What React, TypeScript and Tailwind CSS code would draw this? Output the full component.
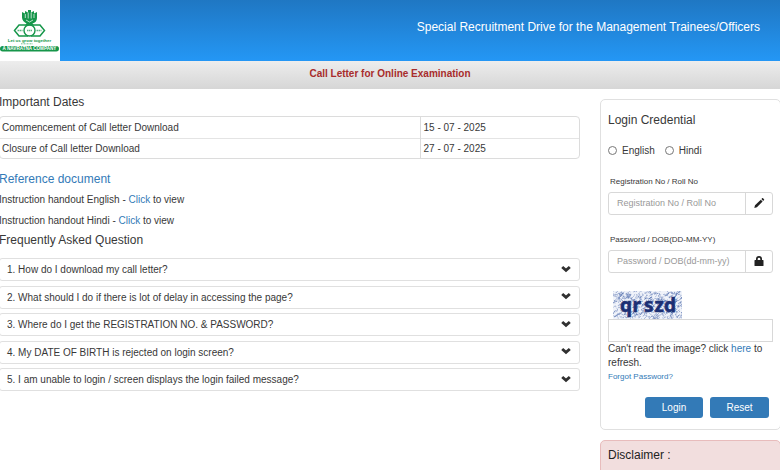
import React from "react";

const faqs = [
  "1. How do I download my call letter?",
  "2. What should I do if there is lot of delay in accessing the page?",
  "3. Where do I get the REGISTRATION NO. & PASSWORD?",
  "4. My DATE OF BIRTH is rejected on login screen?",
  "5. I am unable to login / screen displays the login failed message?",
];

function Logo() {
  return (
    <svg viewBox="0 0 60 61" className="h-[61px] w-[60px] shrink-0 bg-white" role="img" aria-label="Company logo">
      <g fill="none" stroke="#16964a">
        <path d="M19 25h8.500l4 5.500-4 5.500H19l-4.500-5.500z" strokeWidth="1.500" />
        <path d="M31.500 25H40l4.500 5.500L40 36h-8.500l-4-5.500z" strokeWidth="1.500" />
        <circle cx="29.500" cy="30.500" r="5.500" fill="#fff" strokeWidth="1.400" />
        <path d="M17.500 30.500h5M27 30.500h5M36.500 30.500h5" strokeWidth="1.300" strokeDasharray="1.500 .5" opacity=".7" />
      </g>
      <path d="M22 12l3 1.500V11l3 1.500V10h3v2.500l3-1.500v2.500l3-1.500v6c0 3-2 5-4.500 5.500l1.500 2h-9l1.500-2C24 22 22 20 22 17.500z" fill="#16964a" />
      <path d="M25.300 14v4M28.200 12.500v6M31.200 12.500v6M34 14v4M26 20l3.500 2 3.500-2" stroke="#fff" strokeWidth=".7" fill="none" />
      <text x="29.500" y="42.300" textAnchor="middle" fontSize="4.400" fontWeight="bold" fontFamily="Liberation Sans, sans-serif" fill="#16964a">Let us grow together</text>
      <path d="M21 43.800h12" stroke="#16964a" strokeWidth=".6" strokeDasharray="1 .5" />
      <rect x="0" y="46" width="59" height="5.500" rx="2.700" fill="#16964a" />
      <text x="29.500" y="50.300" textAnchor="middle" fontSize="4.600" fontWeight="bold" fontFamily="Liberation Sans, sans-serif" fill="#fff">A NAVRATNA COMPANY</text>
    </svg>
  );
}

function Chevron() {
  return (
    <svg viewBox="0 0 10 8" className="h-2 w-2.5" aria-hidden="true">
      <path d="M1.200 2L5 5.400 8.800 2" fill="none" stroke="#303030" strokeWidth="2.900" />
    </svg>
  );
}

function Pencil() {
  return (
    <svg viewBox="0 0 12 12" className="size-3" fill="#222" aria-hidden="true">
      <path d="M1.300 11l.7-2.700L7.800 2.700l1.800 1.800L3.900 10.200zM8.400 2.100l.8-.8c.3-.3.600-.3.900 0l.9.900c.3.300.3.600 0 .9l-.8.800z" />
    </svg>
  );
}

function Lock() {
  return (
    <svg viewBox="0 0 12 12" className="size-3" fill="#222" aria-hidden="true">
      <path d="M2 5h1V4a3 3 0 0 1 6 0v1h1q.5 0 .5.500v5q0 .5-.5.500H2q-.5 0-.5-.5V5.500Q1.500 5 2 5zm2.700 0h2.600V4a1.300 1.300 0 0 0-2.600 0z" />
    </svg>
  );
}

// A seeded generator keeps the captcha noise the same on every render.
let seed = 11;
const random = () => {
  seed = (seed * 16807) % 2147483647;
  return seed / 2147483647;
};
const specks = Array.from({ length: 480 }, () => {
  const x = random() * 69;
  const y = random() * 28;
  const a = (random() - 0.5) * 6;
  const b = (random() - 0.5) * 5;
  return `M${x.toFixed(1)} ${y.toFixed(1)}q${b.toFixed(1)} ${a.toFixed(1)} ${a.toFixed(1)} ${b.toFixed(1)}`;
}).join("");

function Captcha() {
  return (
    <svg viewBox="0 0 69 28" className="ml-[5px] block h-7 w-[69px]" role="img" aria-label="Captcha qrszd">
      <rect width="69" height="28" fill="#f0f3fa" />
      <path d={specks} fill="none" stroke="#4864a8" strokeWidth=".55" opacity=".8" />
      <text x="7 19.500 31 41.500 51" y="21" fontSize="19" fontWeight="bold" fontFamily="Noto Sans, sans-serif" fill="#1b2f74" stroke="#1b2f74" strokeWidth=".6">qrszd</text>
    </svg>
  );
}

type FieldProps = { id: string; label: string; placeholder: string; type: string; icon: React.ReactNode };

function Field({ id, label, placeholder, type, icon }: FieldProps) {
  return (
    <div>
      <label htmlFor={id} className="block pl-0.5 text-[8px] leading-5">{label}</label>
      <div className="flex h-[23px] rounded-[3px] border border-[#d8d8d8]">
        <input id={id} type={type} placeholder={placeholder} className="min-w-0 flex-1 px-2 text-[9px] placeholder:text-[#999] focus:outline-none" />
        <span className="flex w-[27px] items-center justify-center border-l border-[#d8d8d8] pb-0.5">{icon}</span>
      </div>
    </div>
  );
}

export default function App() {
  return (
    <div className="h-screen overflow-hidden bg-white font-['Liberation_Sans',Arial,sans-serif] text-[10px] text-[#383838]">
      <header className="flex items-center bg-linear-to-b from-[#1f77c3] to-[#2497f5]">
        <Logo />
        <h1 className="flex-1 pr-5 pb-2 text-right text-[12px] leading-5 text-white">
          Special Recruitment Drive for the Management Trainees/Officers
        </h1>
      </header>
      <div className="h-7 bg-linear-to-b from-[#ededed] to-[#d6d6d6] text-center text-[10px] leading-[26px] font-bold text-[#a82c2c]">
        Call Letter for Online Examination
      </div>
      <main className="-mr-px flex items-start gap-5">
        <div className="-ml-px min-w-0 flex-1">
          <h2 className="pt-1 text-[12px] leading-[18px]">Important Dates</h2>
          <div className="mt-[5px] overflow-hidden rounded border border-[#dcdcdc]">
            <table className="w-full border-collapse text-left">
              <tbody>
                <tr className="h-[21px] border-b border-[#e4e4e4]">
                  <td className="w-[420px] border-r border-[#dcdcdc] px-0.5">Commencement of Call letter Download</td>
                  <td className="px-[3px]">15 - 07 - 2025</td>
                </tr>
                <tr className="h-5">
                  <td className="border-r border-[#dcdcdc] px-0.5">Closure of Call letter Download</td>
                  <td className="px-[3px]">27 - 07 - 2025</td>
                </tr>
              </tbody>
            </table>
          </div>
          <h2 className="mt-2.5 text-[12px] leading-5 text-[#337ab7]">Reference document</h2>
          <p className="leading-[21px]">Instruction handout English - <a href="#english" className="text-[#337ab7]">Click</a> to view</p>
          <p className="leading-[21px]">Instruction handout Hindi - <a href="#hindi" className="text-[#337ab7]">Click</a> to view</p>
          <h2 className="text-[12px] leading-[18px]">Frequently Asked Question</h2>
          <div className="mt-[9px] flex h-[133px] flex-col justify-between">
            {faqs.map((q) => (
              <button key={q} type="button" className="flex h-[23px] items-center justify-between rounded-[3px] border border-[#e0e0e0] pr-2 pl-[7px] text-left">
                <span>{q}</span>
                <span className="pb-0.5"><Chevron /></span>
              </button>
            ))}
          </div>
        </div>
        <aside className="w-[181px] shrink-0 pt-2.5">
          <form className="rounded-[5px] border border-[#e0e0e0] px-[7px] pt-2.5 pb-[11px]" onSubmit={(e) => e.preventDefault()}>
            <h2 className="text-[12px] leading-5">Login Credential</h2>
            <div className="mt-2.5 flex h-5 items-center gap-2.5">
              <label className="flex items-center gap-[5px]">
                <input type="radio" name="language" className="size-[9px] appearance-none rounded-full border border-[#777] checked:bg-[#337ab7]" />
                English
              </label>
              <label className="flex items-center gap-[5px]">
                <input type="radio" name="language" className="size-[9px] appearance-none rounded-full border border-[#777] checked:bg-[#337ab7]" />
                Hindi
              </label>
            </div>
            <div className="mt-3 flex flex-col gap-[15px]">
              <Field id="registration" label="Registration No / Roll No" placeholder="Registration No / Roll No" type="text" icon={<Pencil />} />
              <Field id="password" label="Password / DOB(DD-MM-YY)" placeholder="Password / DOB(dd-mm-yy)" type="password" icon={<Lock />} />
            </div>
            <div className="mt-[18px]">
              <Captcha />
              <input type="text" aria-label="Captcha text" className="block h-[23px] w-full border border-[#d8d8d8] px-2 focus:outline-none" />
            </div>
            <p className="leading-3.5">Can't read the image? click <a href="#refresh" className="text-[#337ab7]">here</a> to<br />refresh.</p>
            <a href="#forgot" className="block text-[8px] leading-3.5 text-[#337ab7]">Forgot Password?</a>
            <div className="mt-[13px] flex justify-end gap-[7px] pr-1 text-white">
              <button type="submit" className="h-[21px] w-[58px] rounded-[3px] bg-[#337ab7]">Login</button>
              <button type="reset" className="h-[21px] w-[59px] rounded-[3px] bg-[#337ab7]">Reset</button>
            </div>
          </form>
          <section className="mt-2.5 h-20 rounded-[5px] border border-[#e8bcbc] bg-[#f2dede] px-[7px] pt-1">
            <h2 className="text-[12px] leading-5 text-[#222]">Disclaimer :</h2>
          </section>
        </aside>
      </main>
    </div>
  );
}
